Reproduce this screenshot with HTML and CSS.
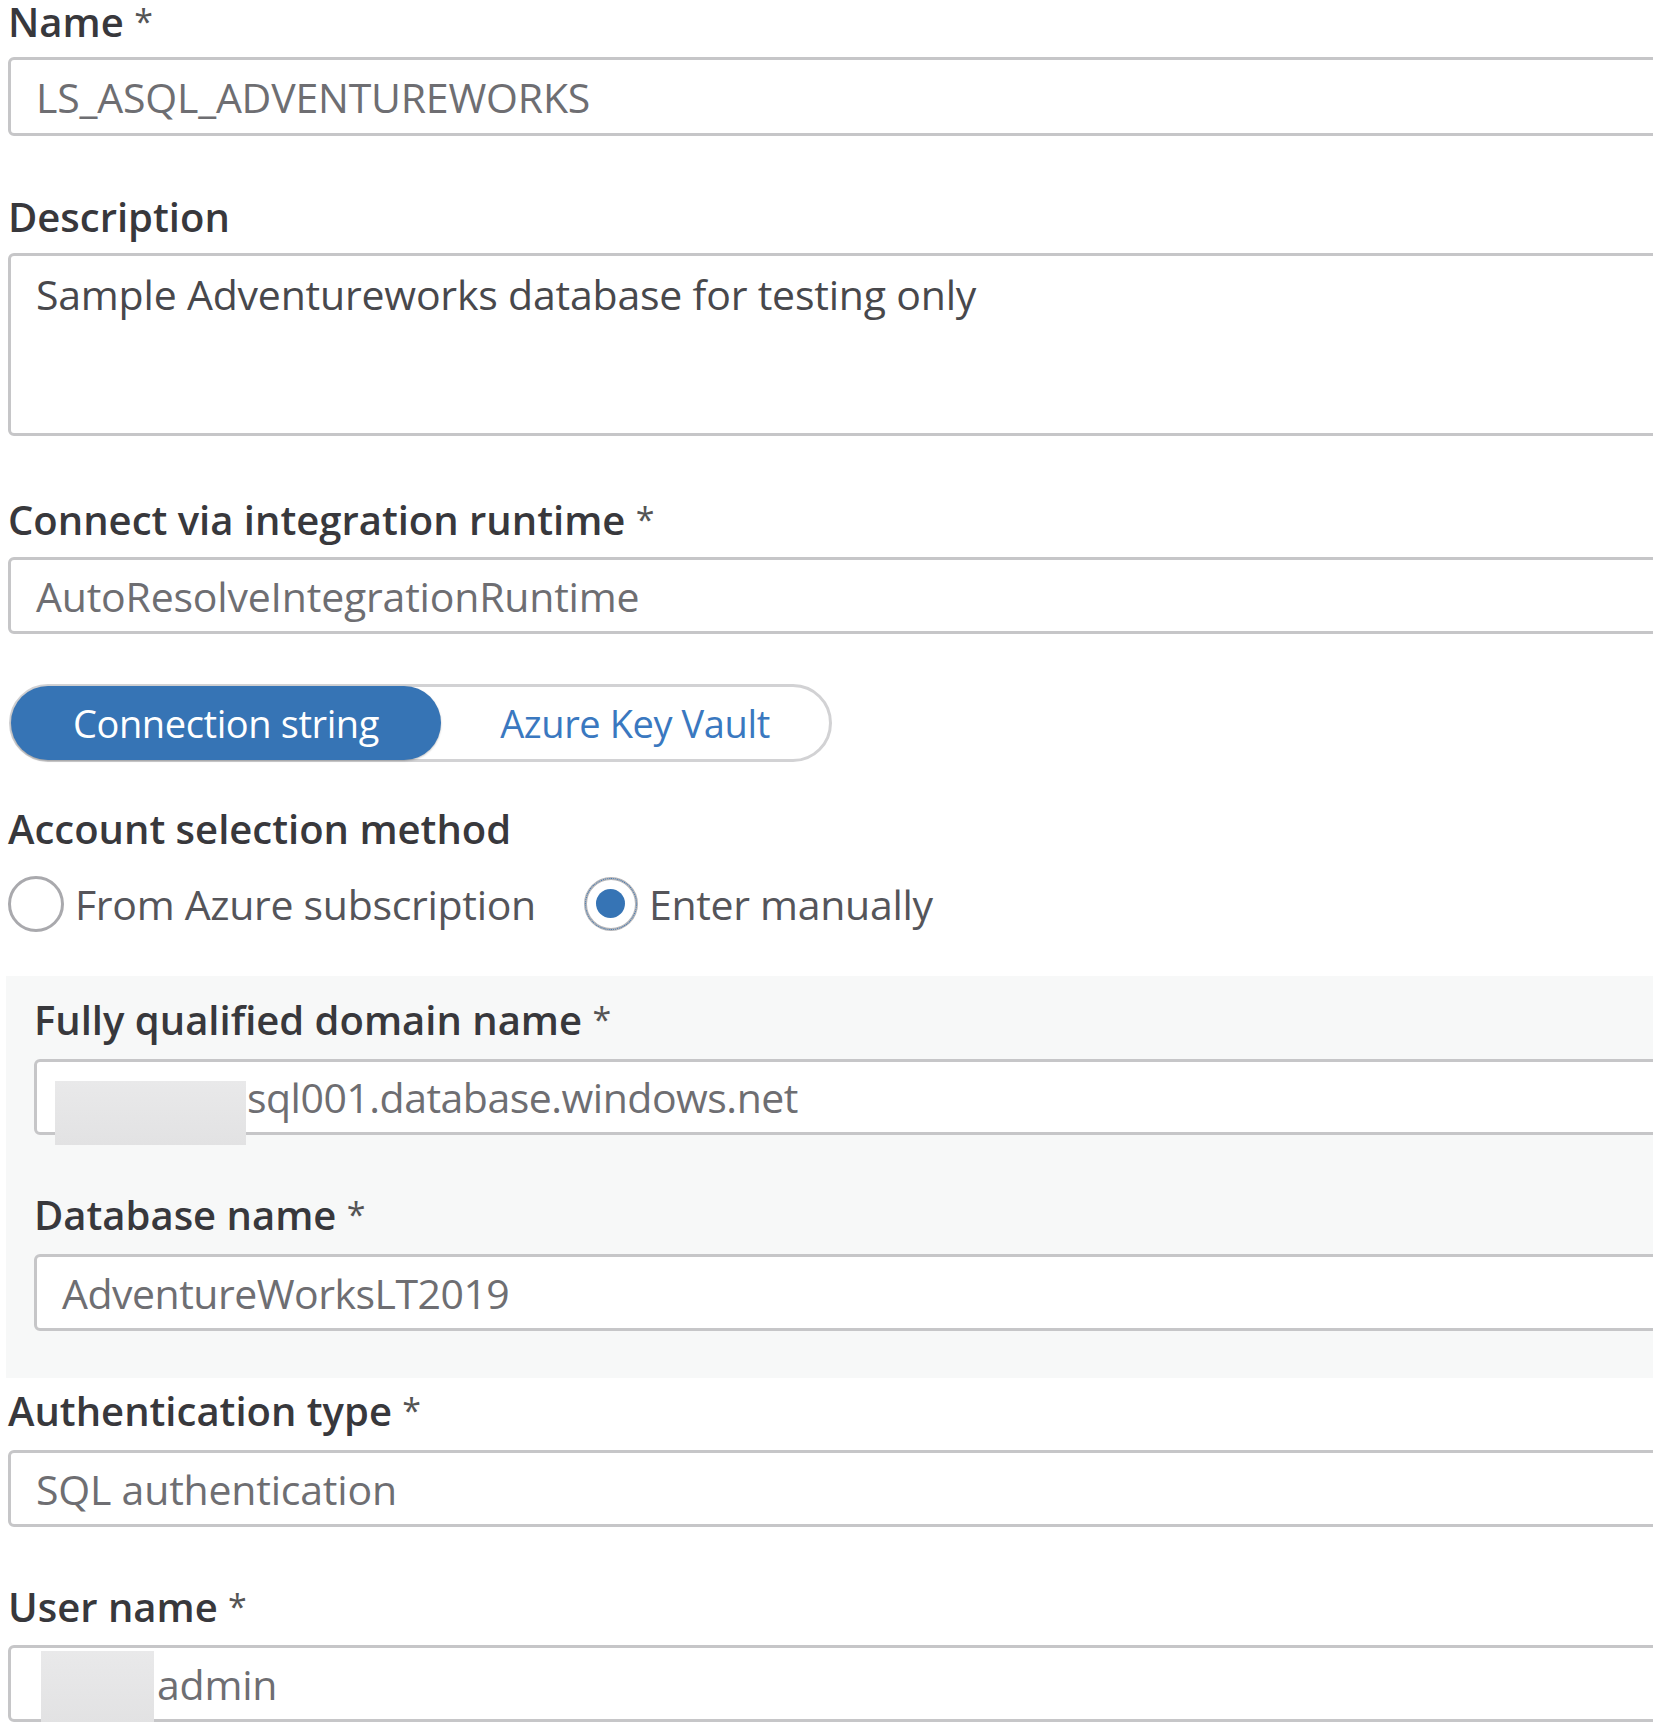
FILE: index.html
```html
<!DOCTYPE html>
<html lang="en">
<head>
<meta charset="utf-8">
<title>Linked service</title>
<link rel="stylesheet" href="styles.css">
</head>
<body>
<form class="form">
  <div class="label lbl-name">Name <span class="req">*</span></div>
  <div class="box box-name"><span class="val">LS_ASQL_ADVENTUREWORKS</span></div>

  <div class="label lbl-desc">Description</div>
  <div class="box box-desc"><span class="val dark">Sample Adventureworks database for testing only</span></div>

  <div class="label lbl-ir">Connect via integration runtime <span class="req">*</span></div>
  <div class="box box-ir"><span class="val">AutoResolveIntegrationRuntime</span></div>

  <div class="toggle">
    <span class="seg seg-on">Connection string</span>
    <span class="seg seg-off">Azure Key Vault</span>
  </div>

  <div class="label lbl-acct">Account selection method</div>
  <div class="radios">
    <span class="radio"><span class="circle"></span><span class="rtext">From Azure subscription</span></span>
    <span class="radio checked"><span class="circle"><span class="dot"></span></span><span class="rtext">Enter manually</span></span>
  </div>

  <div class="panel">
    <div class="label lbl-fqdn">Fully qualified domain name <span class="req">*</span></div>
    <div class="box box-fqdn"><span class="redact redact-fqdn"></span><span class="val">sql001.database.windows.net</span></div>
    <div class="label lbl-db">Database name <span class="req">*</span></div>
    <div class="box box-db"><span class="val">AdventureWorksLT2019</span></div>
  </div>

  <div class="label lbl-auth">Authentication type <span class="req">*</span></div>
  <div class="box box-auth"><span class="val">SQL authentication</span></div>

  <div class="label lbl-user">User name <span class="req">*</span></div>
  <div class="box box-user"><span class="redact redact-user"></span><span class="val">admin</span></div>
</form>
</body>
</html>
```
FILE: styles.css
```css
html, body {
  margin: 0;
  padding: 0;
  background: #ffffff;
  overflow: hidden;
}
body {
  font-family: "Open Sans", "Noto Sans", "Liberation Sans", sans-serif;
  color: #3d3d3d;
}
.form {
  display: flex;
  flex-direction: column;
  align-items: flex-start;
  padding-left: 8px;
  padding-top: 2px;
  width: 1720px;
}
.label {
  font-size: 40px;
  font-weight: 600;
  line-height: 44px;
  height: 44px;
  color: #38383c;
  letter-spacing: 0;
  white-space: nowrap;
}
.req {
  font-weight: 400;
  color: #555;
  font-size: 34px;
  position: relative;
  top: -3px;
}
.box {
  position: relative;
  box-sizing: border-box;
  align-self: stretch;
  border: 3px solid #c6c6c8;
  border-radius: 6px;
  background: #fff;
  display: flex;
  align-items: center;
  padding-left: 25px;
  height: 78px;
}
.val {
  font-size: 41px;
  line-height: 44px;
  color: #6e6e72;
  letter-spacing: -0.2px;
  white-space: nowrap;
}
.val.dark { color: #48484c; }

.lbl-name { margin-top: -2px; }
.box-name { margin-top: 13px; height: 79px; }
.lbl-desc { margin-top: 59px; }
.box-desc {
  margin-top: 14px;
  height: 183px;
  align-items: flex-start;
  padding-top: 16px;
}
.lbl-ir { margin-top: 62px; }
.box-ir { margin-top: 15px; height: 77px; }

.toggle {
  margin-top: 50px;
  margin-left: 1px;
  box-sizing: border-box;
  width: 823px;
  height: 78px;
  border: 3px solid #d2d2d4;
  border-radius: 40px;
  display: flex;
  align-items: stretch;
  padding: 0;
}
.seg {
  display: flex;
  align-items: center;
  justify-content: center;
  font-size: 38px;
  letter-spacing: -0.4px;
  white-space: nowrap;
}
.seg-on {
  width: 430px;
  margin: -1px 0 -1px -1px;
  background: #3674b5;
  color: #ffffff;
  border-radius: 38px;
  box-shadow: 0 1px 2px rgba(0,0,0,0.25);
}
.seg-off {
  flex: 1;
  color: #3a78c0;
}

.lbl-acct { margin-top: 45px; }
.radios {
  margin-top: 24px;
  display: flex;
  align-items: center;
  gap: 48px;
  height: 57px;
}
.radio {
  display: flex;
  align-items: center;
  gap: 11px;
}
.circle {
  box-sizing: border-box;
  width: 56px;
  height: 56px;
  border: 3px solid #a9a9ad;
  border-radius: 50%;
  display: flex;
  align-items: center;
  justify-content: center;
}
.checked .circle {
  width: 54px;
  height: 54px;
  border-color: #b5b5b8;
  outline: 1px dotted #3674b5;
  outline-offset: -2px;
}
.dot {
  width: 29px;
  height: 29px;
  border-radius: 50%;
  background: #3674b5;
}
.rtext {
  font-size: 41px;
  line-height: 44px;
  color: #55555a;
  letter-spacing: -0.3px;
  white-space: nowrap;
}

.panel {
  margin-top: 44px;
  margin-left: -2px;
  align-self: stretch;
  background: #f7f8f8;
  padding: 22px 0 47px 28px;
  display: flex;
  flex-direction: column;
  align-items: flex-start;
}
.box-fqdn { margin-top: 17px; height: 76px; padding-left: 210px; }
.box-fqdn .val, .box-db .val { letter-spacing: -0.5px; }
.lbl-db { margin-top: 58px; }
.box-db { margin-top: 17px; height: 77px; }

.lbl-auth { margin-top: 11px; }
.box-auth { margin-top: 17px; height: 77px; }
.lbl-user { margin-top: 58px; }
.box-user { margin-top: 16px; height: 77px; padding-left: 146px; }

.redact {
  position: absolute;
  background: linear-gradient(180deg, #e9e9ea, #e2e2e3);
}
.redact-fqdn {
  left: 18px;
  top: 19px;
  width: 191px;
  height: 64px;
}
.redact-user {
  left: 30px;
  top: 3px;
  width: 113px;
  height: 72px;
}
```
